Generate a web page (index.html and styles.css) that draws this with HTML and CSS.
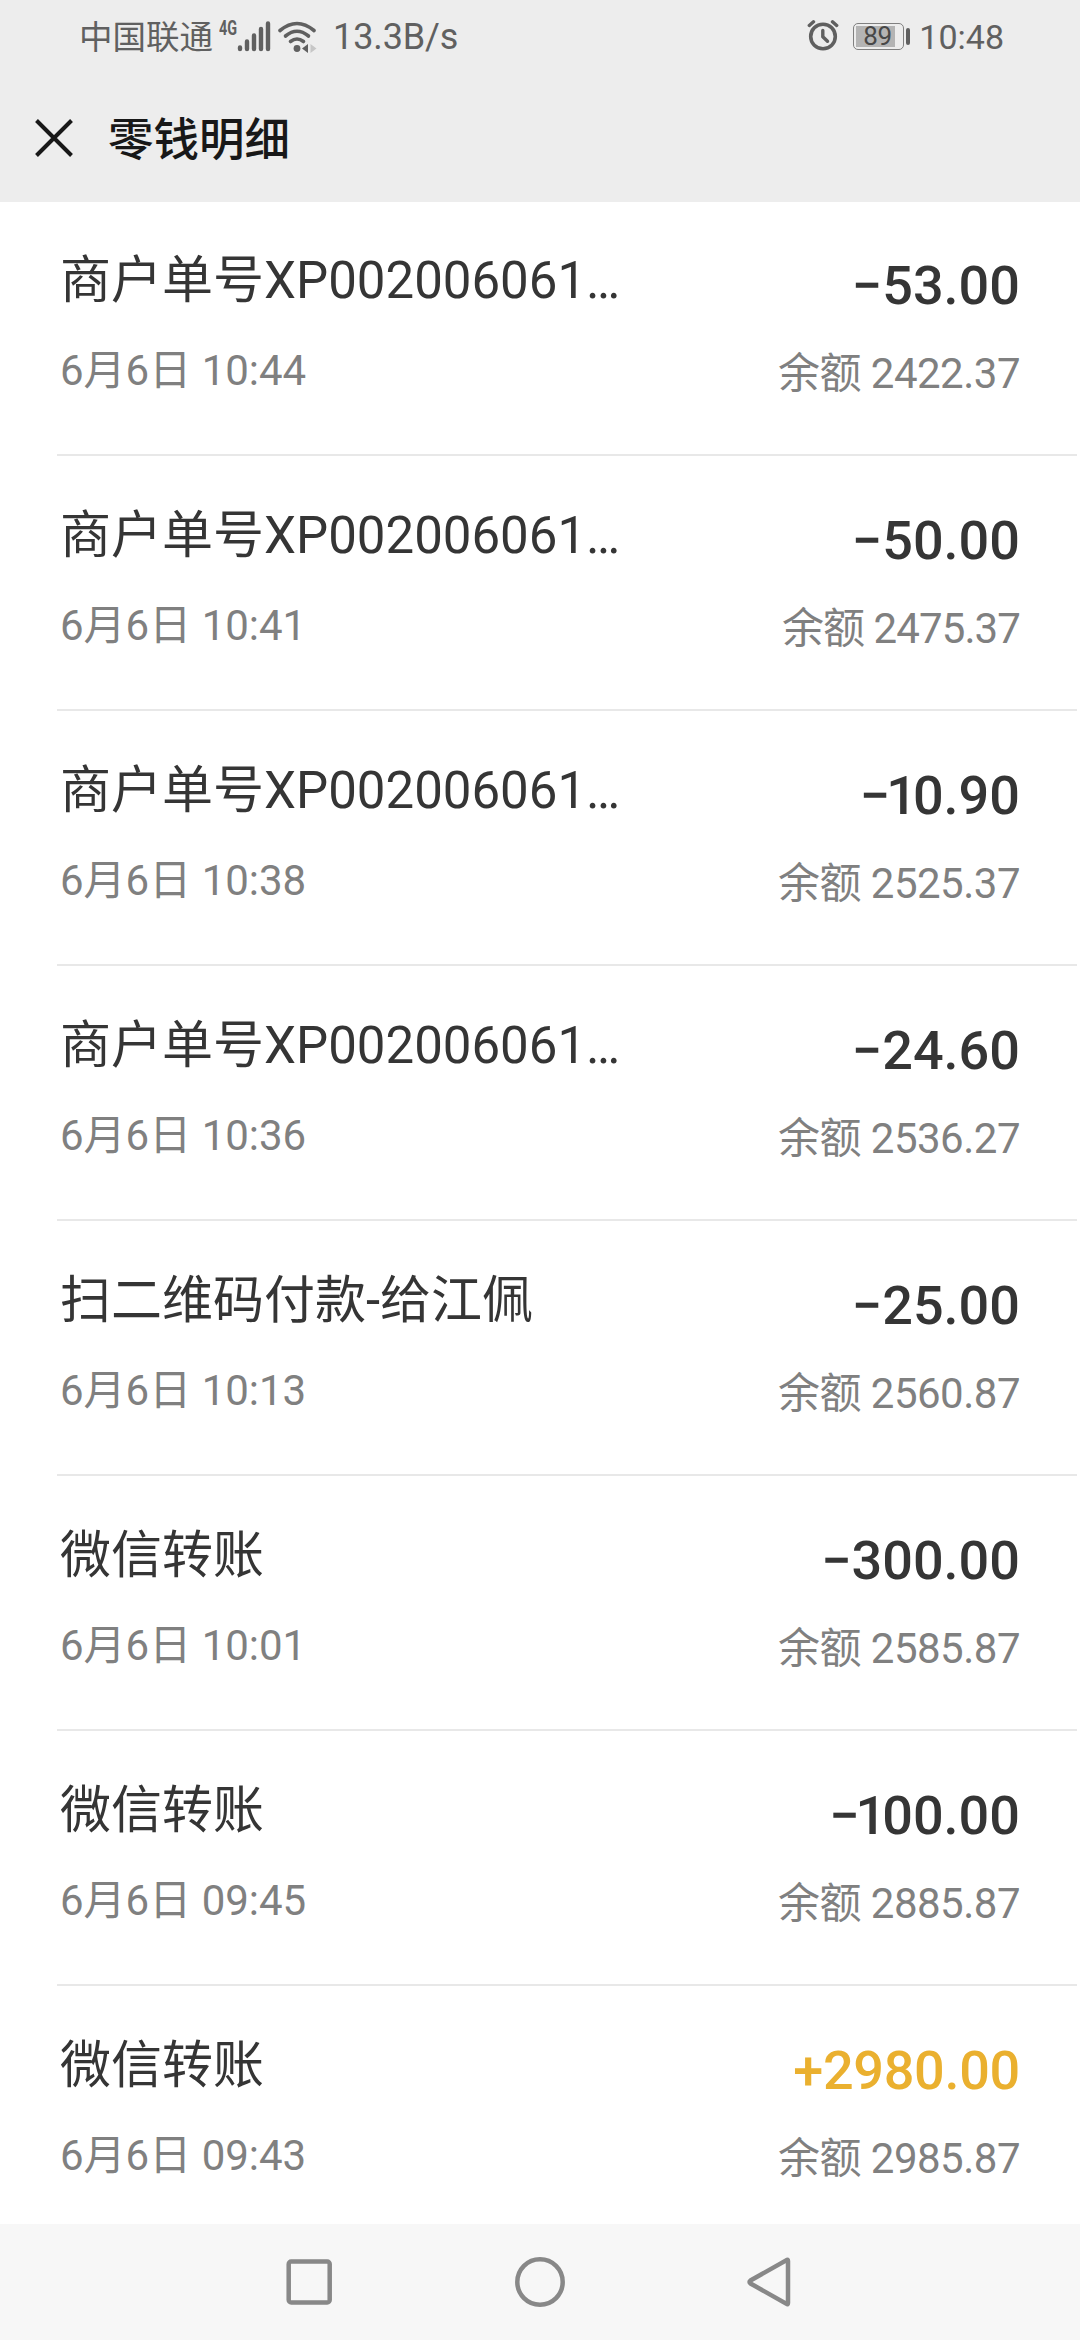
FILE: index.html
```html
<!DOCTYPE html>
<html lang="zh-CN">
<head>
    <meta charset="UTF-8">
    <title>零钱明细</title>
    <meta name="viewport" content="width=device-width, initial-scale=1.0">
    <link rel="stylesheet" href="styles.css">
</head>
<body>
    <header class="header">
        <div class="status">
            <span class="status__carrier">中国联通</span>
            <span class="status__network">4G</span>
            <svg class="status__signal" width="34" height="32" viewBox="0 0 34 32">
                <path d="M3 27.500v1.500M10 21.500v7.500M17 15.500v13.500M24 9v20M31 3.500v25.500" stroke="#606060" stroke-width="4.400" stroke-linecap="round"/>
            </svg>
            <svg class="status__wifi" width="40" height="34" viewBox="0 0 40 34">
                <g fill="none" stroke="#606060" stroke-width="3.600" stroke-linecap="round">
                    <path d="M3 10.500Q20-3.500 37 10.500"/>
                    <path d="M8.500 16Q20 6.500 31.500 16"/>
                    <path d="M13.500 21.500Q20 16.500 26.500 21.500"/>
                </g>
                <circle cx="20" cy="28.500" r="3.400" fill="#606060"/>
                <path d="M31 24v9l-6-4.500z" fill="#606060"/>
                <path d="M33.500 24v9l6-4.500z" fill="#c6c6c6"/>
            </svg>
            <span class="status__speed">13.3B/s</span>
            <svg class="status__alarm" width="32" height="34" viewBox="0 0 32 34">
                <g fill="none" stroke="#606060" stroke-linecap="round">
                    <circle cx="16" cy="18.500" r="12.300" stroke-width="3.600"/>
                    <path d="M15.800 12.500v6.200l4.700 4.600" stroke-width="3.400" stroke-linejoin="round"/>
                    <path d="M2.300 7.500l4.200-3.700M29.700 7.500l-4.200-3.700" stroke-width="3.400"/>
                </g>
            </svg>
            <div class="battery">
                <div class="battery__body">
                    <div class="battery__level">89</div>
                </div>
                <div class="battery__cap"></div>
            </div>
            <span class="status__time">10:48</span>
        </div>
        <div class="titlebar">
            <svg class="titlebar__close" width="40" height="40" viewBox="0 0 40 40">
                <path d="M2.500 2.500l35 35M37.500 2.500l-35 35" stroke="#181818" stroke-width="4"/>
            </svg>
            <h1 class="titlebar__text">零钱明细</h1>
        </div>
    </header>

    <main class="list">
        <div class="item">
            <div class="item__info">
                <div class="item__title">商户单号XP002006061…</div>
                <div class="item__date">6月6日 10:44</div>
            </div>
            <div class="item__sum">
                <div class="item__amount">−53.00</div>
                <div class="item__balance">余额 2422.37</div>
            </div>
        </div>
        <div class="item">
            <div class="item__info">
                <div class="item__title">商户单号XP002006061…</div>
                <div class="item__date">6月6日 10:41</div>
            </div>
            <div class="item__sum">
                <div class="item__amount">−50.00</div>
                <div class="item__balance item__balance--tight">余额 2475.37</div>
            </div>
        </div>
        <div class="item">
            <div class="item__info">
                <div class="item__title">商户单号XP002006061…</div>
                <div class="item__date">6月6日 10:38</div>
            </div>
            <div class="item__sum">
                <div class="item__amount">−<span class="item__one">1</span>0.90</div>
                <div class="item__balance">余额 2525.37</div>
            </div>
        </div>
        <div class="item">
            <div class="item__info">
                <div class="item__title">商户单号XP002006061…</div>
                <div class="item__date">6月6日 10:36</div>
            </div>
            <div class="item__sum">
                <div class="item__amount">−24.60</div>
                <div class="item__balance">余额 2536.27</div>
            </div>
        </div>
        <div class="item">
            <div class="item__info">
                <div class="item__title">扫二维码付款-给江佩</div>
                <div class="item__date">6月6日 10:13</div>
            </div>
            <div class="item__sum">
                <div class="item__amount">−25.00</div>
                <div class="item__balance">余额 2560.87</div>
            </div>
        </div>
        <div class="item">
            <div class="item__info">
                <div class="item__title">微信转账</div>
                <div class="item__date">6月6日 10:01</div>
            </div>
            <div class="item__sum">
                <div class="item__amount">−300.00</div>
                <div class="item__balance">余额 2585.87</div>
            </div>
        </div>
        <div class="item">
            <div class="item__info">
                <div class="item__title">微信转账</div>
                <div class="item__date">6月6日 09:45</div>
            </div>
            <div class="item__sum">
                <div class="item__amount">−<span class="item__one">1</span>00.00</div>
                <div class="item__balance">余额 2885.87</div>
            </div>
        </div>
        <div class="item">
            <div class="item__info">
                <div class="item__title">微信转账</div>
                <div class="item__date">6月6日 09:43</div>
            </div>
            <div class="item__sum">
                <div class="item__amount item__amount--income">+2980.00</div>
                <div class="item__balance">余额 2985.87</div>
            </div>
        </div>
    </main>

    <nav class="navbar">
        <svg width="60" height="60" viewBox="0 0 60 60">
            <rect x="8.700" y="9.500" width="41" height="41" rx="2.500"/>
        </svg>
        <svg width="60" height="60" viewBox="0 0 60 60">
            <circle cx="30" cy="30" r="22.700"/>
        </svg>
        <svg width="60" height="60" viewBox="0 0 60 60">
            <path d="M46.500 8.200Q48 7 48 9V51Q48 53 46.500 51.800L10.500 31.500Q8.500 30 10.500 28.500z"/>
        </svg>
    </nav>
</body>
</html>
```
FILE: styles.css
```css
* {
    box-sizing: border-box;
}

body {
    display: flex;
    flex-direction: column;
    height: 2340px;
    margin: 0;
    background: #fff;
    color: #353535;
    font-family: Roboto, "Noto Sans CJK SC", sans-serif;
    overflow: hidden;
}

.header {
    flex: none;
    height: 202px;
    background: #ededed;
}

.status {
    display: flex;
    align-items: flex-start;
    height: 76px;
    padding: 0 76px 0 79px;
    color: #606060;
    white-space: nowrap;
}

.status__carrier {
    font-size: 33.5px;
    line-height: 76px;
}

.status__network {
    width: 18px;
    margin: 16px 0 0 6px;
    font-size: 20px;
    font-weight: 700;
    line-height: 24px;
    transform: scaleX(0.72);
    transform-origin: left;
}

.status__signal {
    margin-top: 20px;
}

.status__wifi {
    margin: 20px 0 0 6px;
}

.status__speed {
    margin-left: 16px;
    font-size: 36px;
    line-height: 75px;
    letter-spacing: -0.1px;
}

.status__alarm {
    margin: 18px 14px 0 auto;
}

.battery {
    display: flex;
    align-items: center;
    gap: 2px;
    height: 27px;
    margin: 23px 9px 0 0;
}

.battery__body {
    width: 51px;
    height: 27px;
    padding: 2px;
    border: 1.5px solid #808080;
    border-radius: 5px;
}

.battery__level {
    width: 39px;
    height: 21px;
    padding-left: 7px;
    background: #b4b4b4;
    color: #484848;
    font-size: 26px;
    line-height: 21px;
    letter-spacing: -0.5px;
}

.battery__cap {
    width: 4px;
    height: 17px;
    border-radius: 2px;
    background: #606060;
}

.status__time {
    font-size: 34px;
    line-height: 75px;
}

.titlebar {
    display: flex;
    align-items: center;
    height: 124px;
    padding-left: 34px;
    color: #181818;
}

.titlebar__text {
    margin: 5px 0 0 34px;
    font-size: 45.5px;
    font-weight: 500;
    line-height: 60px;
}

.list {
    flex: 1;
    margin-top: -1px;
    padding: 0 3px 0 57px;
    overflow: hidden;
    clip-path: inset(1px 0 0 0);
}

.item {
    display: flex;
    justify-content: space-between;
    height: 255px;
    padding: 0 57px 0 3px;
    border-bottom: 2px solid #e8e8e8;
    white-space: nowrap;
}

.item:last-child {
    border-bottom: none;
}

.item__info {
    padding-top: 50px;
}

.item__title {
    font-size: 51px;
    line-height: 60px;
}

.item__date {
    margin-top: 35px;
    color: #808080;
    font-size: 42px;
    line-height: 50px;
}

.item__sum {
    padding-top: 53px;
    text-align: right;
}

.item__amount {
    font-size: 54px;
    font-weight: 500;
    line-height: 64px;
}

.item__amount--income {
    color: #eab02f;
    letter-spacing: -0.3px;
}

/* narrow leading digit */
.item__one {
    margin: 0 -4px;
}

.item__balance {
    margin-top: 31px;
    color: #808080;
    font-size: 42px;
    line-height: 50px;
    letter-spacing: -0.5px;
}

.item__balance--tight {
    letter-spacing: -0.9px;
}

.navbar {
    flex: none;
    display: flex;
    justify-content: center;
    align-items: center;
    gap: 170px;
    height: 116px;
    background: #f7f7f7;
    fill: none;
    stroke: #888;
    stroke-width: 4.5px;
}
```
